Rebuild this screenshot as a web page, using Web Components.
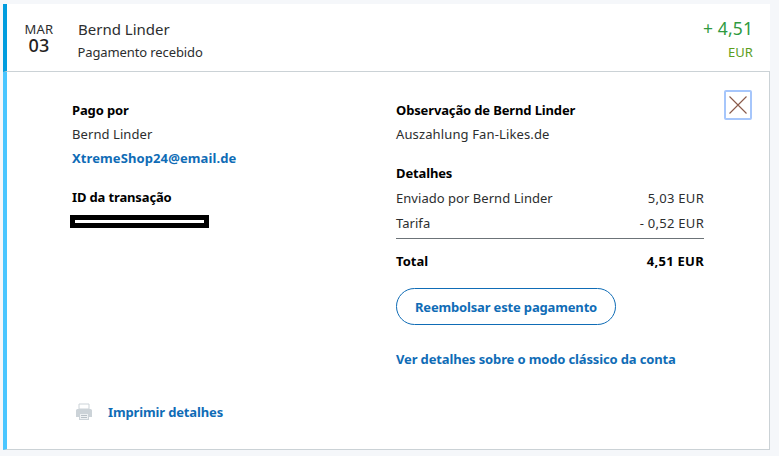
<!DOCTYPE html>
<html lang="pt"><head><meta charset="utf-8"><style>
html,body{margin:0;padding:0;background:#f5f7fa;}
body{width:779px;height:456px;overflow:hidden;font-family:"Noto Sans","Open Sans",sans-serif;color:#2c2e2f;}
</style></head><body>
<tx-panel>
<tx-row slot="row"></tx-row>
<tx-details slot="details"></tx-details>
</tx-panel>
<script>
function def(name,html){customElements.define(name,class extends HTMLElement{constructor(){super();this.attachShadow({mode:'open'}).innerHTML=html;}});}
def('tx-panel',`<style>:host{display:block;margin:4px 9px 0 3px;width:767px;box-sizing:border-box}</style><slot name="row"></slot><slot name="details"></slot>`);
def('tx-row',`<style>
:host{display:flex;box-sizing:border-box;height:68px;background:#fff;border-left:4px solid #009cde;border-bottom:1px solid #cbd2d6;}
.date{width:64px;padding-top:18px;text-align:center;box-sizing:border-box;flex:none}
.m{font-size:13px;line-height:15px;color:#2c2e2f;letter-spacing:.2px}
.d{font-size:18px;line-height:17px;color:#1f2122;letter-spacing:.3px;font-weight:500}
.who{flex:1;padding-top:15px;margin-left:7px}
.n{font-size:15px;line-height:21px;color:#2c2e2f}
.s{font-size:13px;line-height:18px;margin-top:3px;color:#2c2e2f;letter-spacing:-.11px;margin-left:-.5px}
.amt{text-align:right;padding:13px 17px 0 0}
.a{font-size:17.500px;line-height:23px;color:#2f9a3f;letter-spacing:.1px}
.c{font-size:13px;line-height:18px;margin-top:3px;color:#5c9e1e;letter-spacing:.1px}
</style>
<div class="date"><div class="m">MAR</div><div class="d">03</div></div>
<div class="who"><div class="n">Bernd Linder</div><div class="s">Pagamento recebido</div></div>
<div class="amt"><div class="a">+ 4,51</div><div class="c">EUR</div></div>`);
def('tx-close',`<style>
:host{position:absolute;top:18px;right:17px;width:28px;height:30px;box-sizing:border-box;border:2px solid #a6c6fb;border-radius:2px;display:block}
svg{display:block;width:24px;height:26px}
</style><svg viewBox="0 0 24 26"><path d="M3.500 4.500L20.500 21.500M20.500 4.500L3.500 21.500" stroke="#8a5a4a" stroke-width="1.100" fill="none"/></svg>`);
def('tx-details',`<style>
:host{display:block;position:relative;box-sizing:border-box;height:378px;background:#fff;border-left:4px solid #4ac6ff;border-right:1px solid #cbd2d6;border-bottom:1px solid #cbd2d6;font-size:13px;line-height:18px;color:#2c2e2f}
.cols{display:grid;grid-template-columns:324px 308px;padding:29px 0 0 65px;height:308px;box-sizing:border-box}
b{font-weight:700;color:#000;display:block;letter-spacing:-.14px}
a{color:#0f6cb6;font-weight:700;text-decoration:none;display:block;letter-spacing:-.14px}
a.mail{letter-spacing:.1px}
.g{margin-top:6px}
.name{letter-spacing:.08px}
.note{letter-spacing:.13px}
.red{width:139px;height:13px;box-sizing:border-box;border:5px solid #000;background:#fff;margin:9px 0 0 -2px}
.id{margin-top:21px}
.hd{margin-top:21px}
.line{display:flex;justify-content:space-between}
.line span:last-child{letter-spacing:.27px}
.line span:first-child{letter-spacing:.04px}
.line.f{margin-top:7px}
.line.t{margin-top:7px;padding-bottom:6px;border-bottom:1px solid #6c7378}
.line.tot{margin-top:13px}
.line.tot span{font-weight:700;color:#000}
.btn{display:flex;align-items:center;justify-content:center;width:220px;height:37px;box-sizing:border-box;border:1px solid #0f6cb6;border-radius:19px;margin-top:18px;color:#0f6cb6;font-weight:700;letter-spacing:-.16px}
.cl{margin-top:25px}
.print{display:flex;align-items:center;gap:15px;padding-left:68px;margin-top:23px}
svg{display:block}
</style>
<tx-close></tx-close>
<div class="cols">
<div><b>Pago por</b><div class="g name">Bernd Linder</div><a class="g mail" href="#">XtremeShop24@email.de</a><b class="id">ID da transação</b><div class="red"></div></div>
<div><b>Observação de Bernd Linder</b><div class="g note">Auszahlung Fan-Likes.de</div><b class="hd">Detalhes</b>
<div class="line f"><span>Enviado por Bernd Linder</span><span>5,03 EUR</span></div>
<div class="line t"><span>Tarifa</span><span>- 0,52 EUR</span></div>
<div class="line tot"><span>Total</span><span>4,51 EUR</span></div>
<div class="btn">Reembolsar este pagamento</div>
<a class="cl" href="#">Ver detalhes sobre o modo clássico da conta</a></div>
</div>
<div class="print"><svg width="18" height="18" viewBox="0 0 18 18"><path d="M4 1h10v5H4z" fill="#fff" stroke="#ccd3d8"/><path d="M2.500 6h13A1.500 1.500 0 0 1 17 7.500V14h-3v3H4v-3H1V7.500A1.500 1.500 0 0 1 2.500 6z" fill="#ccd3d8"/><path d="M5 11h8v5H5z" fill="#eef1f3"/><path d="M6 12.500h6M6 14.500h6" stroke="#b8c0c6"/></svg><a href="#">Imprimir detalhes</a></div>`);
</script></body></html>
